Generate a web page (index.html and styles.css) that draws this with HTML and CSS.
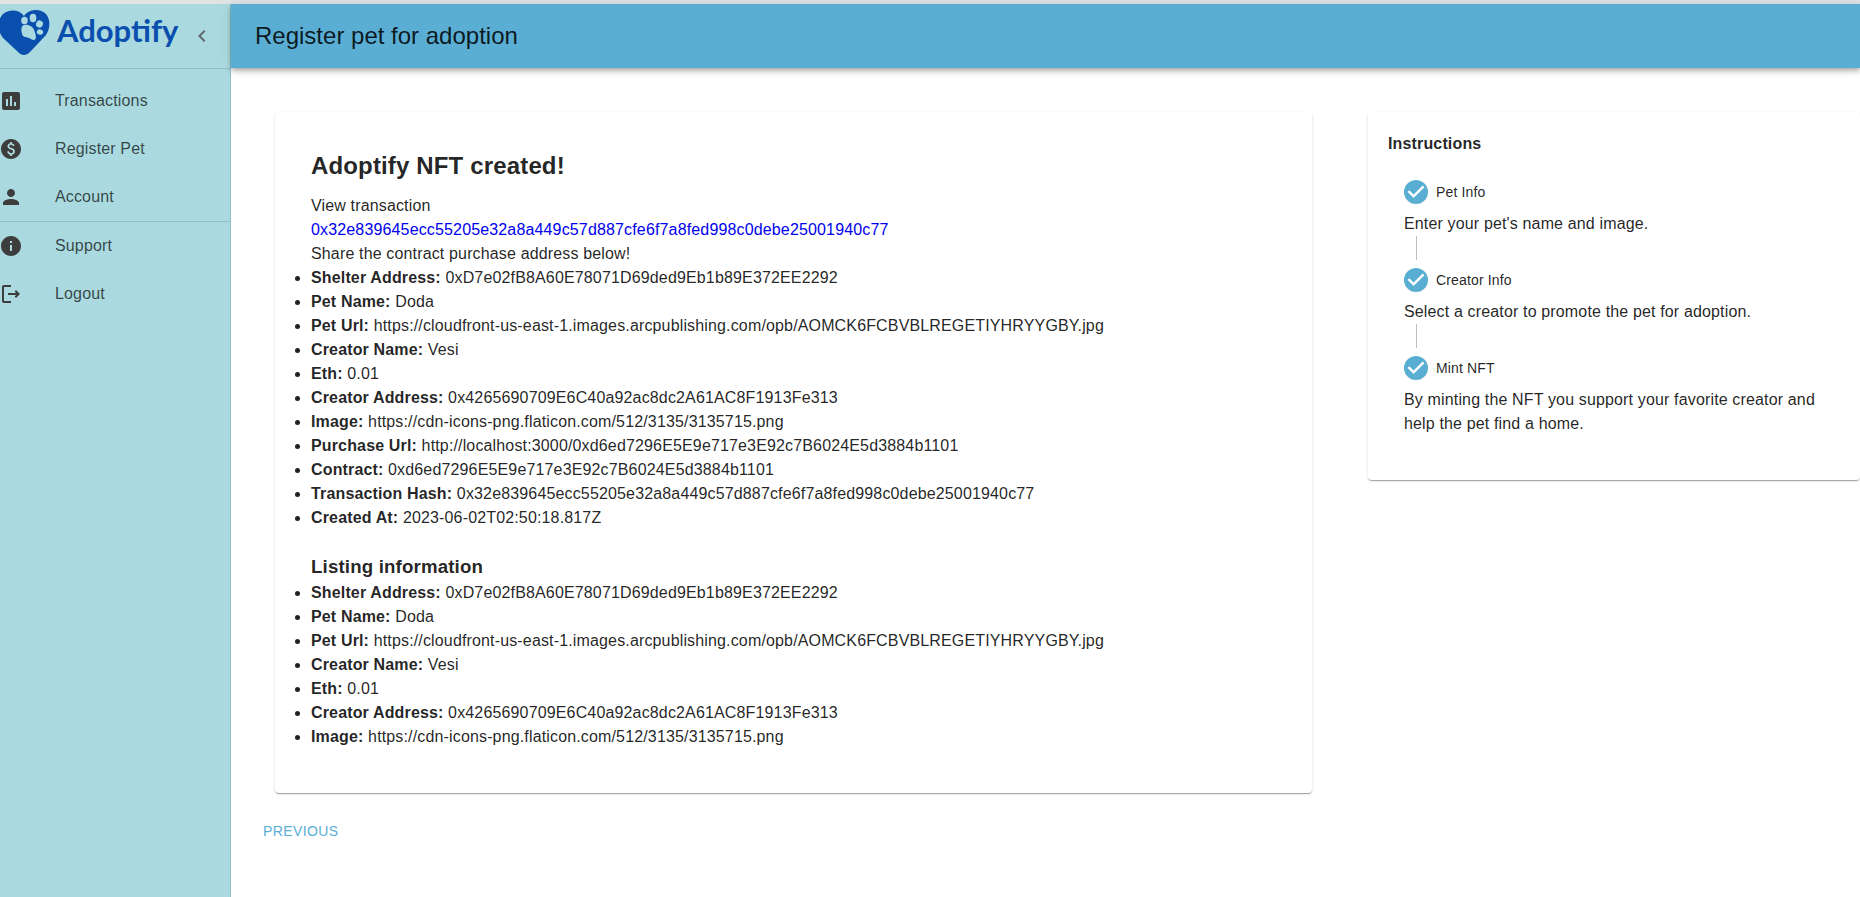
FILE: index.html
```html
<!DOCTYPE html>
<html lang="en">
<head>
<meta charset="utf-8">
<title>Adoptify</title>
<link rel="stylesheet" href="styles.css">
</head>
<body>
<div class="topline"></div>
<div class="app">
  <aside class="sidebar">
    <div class="brand">
      <svg class="logo" viewBox="0 0 50 46" width="50" height="46">
        <path fill="#0a4fae" d="M24 45C22 45 20 44 17 41L3 28C-3 21-3 10 3 4C9-1 19-1 24 6C29-1 40-2 46 4C51 10 50 19 46 25L31 41C28 44 26 45 24 45Z"/>
        <g fill="#aadadf">
          <ellipse cx="24.500" cy="10.500" rx="3.300" ry="3.800"/>
          <ellipse cx="33" cy="8" rx="3.300" ry="4.200"/>
          <ellipse cx="39.500" cy="14" rx="3.400" ry="3.600" transform="rotate(30 39.500 14)"/>
          <ellipse cx="40" cy="22" rx="3.200" ry="2.700" transform="rotate(20 40 22)"/>
          <path d="M24 15C28 14 33 16 34.500 21C35.500 24 36.500 27 35.500 29C34 31.500 31 29 29 28C26 27 22 27 22 23.500C21 20 21 16 24 15Z"/>
        </g>
      </svg>
      <span class="brand-name">Adoptify</span>
      <svg class="chev" viewBox="0 0 24 24" width="24" height="24"><path fill="#5f6a6c" d="M15.410 7.410 14 6l-6 6 6 6 1.410-1.410L10.830 12z"/></svg>
    </div>
    <nav class="nav nav-first">
      <a class="nav-item"><svg class="ico" viewBox="0 0 24 24"><path d="M19 3H5c-1.100 0-2 .9-2 2v14c0 1.100.9 2 2 2h14c1.100 0 2-.9 2-2V5c0-1.100-.9-2-2-2zM9 17H7v-7h2v7zm4 0h-2V7h2v10zm4 0h-2v-4h2v4z"/></svg><span>Transactions</span></a>
      <a class="nav-item"><svg class="ico" viewBox="0 0 24 24"><path d="M12 2C6.480 2 2 6.480 2 12s4.480 10 10 10 10-4.480 10-10S17.520 2 12 2zm.880 15.760V19h-1.750v-1.290c-.74-.18-2.390-.77-3.020-2.960l1.650-.67c.06.220.580 2.090 2.400 2.090.930 0 1.980-.48 1.980-1.610 0-.96-.7-1.460-2.280-2.030-1.100-.39-3.350-1.030-3.350-3.310 0-.1.010-2.400 2.620-2.960V5h1.750v1.240c1.840.320 2.510 1.790 2.660 2.230l-1.580.67c-.11-.35-.59-1.340-1.900-1.340-.7 0-1.810.370-1.810 1.390 0 .950.860 1.310 2.640 1.900 2.400.830 3.010 2.050 3.010 3.450 0 2.630-2.500 3.130-3.020 3.220z"/></svg><span>Register Pet</span></a>
      <a class="nav-item"><svg class="ico" viewBox="0 0 24 24"><path d="M12 12c2.210 0 4-1.790 4-4s-1.790-4-4-4-4 1.790-4 4 1.790 4 4 4zm0 2c-2.670 0-8 1.340-8 4v2h16v-2c0-2.660-5.330-4-8-4z"/></svg><span>Account</span></a>
    </nav>
    <nav class="nav">
      <a class="nav-item"><svg class="ico" viewBox="0 0 24 24"><path d="M12 2C6.480 2 2 6.480 2 12s4.480 10 10 10 10-4.480 10-10S17.520 2 12 2zm1 15h-2v-6h2v6zm0-8h-2V7h2v2z"/></svg><span>Support</span></a>
      <a class="nav-item"><svg class="ico" viewBox="0 0 24 24"><path d="M17 8l-1.410 1.410L17.170 11H9v2h8.170l-1.580 1.580L17 16l4-4-4-4zM5 5h7V3H5c-1.100 0-2 .9-2 2v14c0 1.100.9 2 2 2h7v-2H5V5z"/></svg><span>Logout</span></a>
    </nav>
  </aside>
  <div class="content">
    <header class="appbar"><h1>Register pet for adoption</h1></header>
    <main class="main">
      <div class="col-left">
        <section class="card result">
          <h2>Adoptify NFT created!</h2>
          <p>View transaction</p>
          <p><a class="txlink">0x32e839645ecc55205e32a8a449c57d887cfe6f7a8fed998c0debe25001940c77</a></p>
          <p>Share the contract purchase address below!</p>
          <ul>
            <li><b>Shelter Address:</b> 0xD7e02fB8A60E78071D69ded9Eb1b89E372EE2292</li>
            <li><b>Pet Name:</b> Doda</li>
            <li><b>Pet Url:</b> https://cloudfront-us-east-1.images.arcpublishing.com/opb/AOMCK6FCBVBLREGETIYHRYYGBY.jpg</li>
            <li><b>Creator Name:</b> Vesi</li>
            <li><b>Eth:</b> 0.01</li>
            <li><b>Creator Address:</b> 0x4265690709E6C40a92ac8dc2A61AC8F1913Fe313</li>
            <li><b>Image:</b> https://cdn-icons-png.flaticon.com/512/3135/3135715.png</li>
            <li><b>Purchase Url:</b> http://localhost:3000/0xd6ed7296E5E9e717e3E92c7B6024E5d3884b1101</li>
            <li><b>Contract:</b> 0xd6ed7296E5E9e717e3E92c7B6024E5d3884b1101</li>
            <li><b>Transaction Hash:</b> 0x32e839645ecc55205e32a8a449c57d887cfe6f7a8fed998c0debe25001940c77</li>
            <li><b>Created At:</b> 2023-06-02T02:50:18.817Z</li>
          </ul>
          <h3>Listing information</h3>
          <ul>
            <li><b>Shelter Address:</b> 0xD7e02fB8A60E78071D69ded9Eb1b89E372EE2292</li>
            <li><b>Pet Name:</b> Doda</li>
            <li><b>Pet Url:</b> https://cloudfront-us-east-1.images.arcpublishing.com/opb/AOMCK6FCBVBLREGETIYHRYYGBY.jpg</li>
            <li><b>Creator Name:</b> Vesi</li>
            <li><b>Eth:</b> 0.01</li>
            <li><b>Creator Address:</b> 0x4265690709E6C40a92ac8dc2A61AC8F1913Fe313</li>
            <li><b>Image:</b> https://cdn-icons-png.flaticon.com/512/3135/3135715.png</li>
          </ul>
        </section>
        <button class="prev">PREVIOUS</button>
      </div>
      <section class="card steps">
        <h4>Instructions</h4>
        <div class="step">
          <div class="step-label"><svg class="check" viewBox="0 0 24 24"><path d="M12 0a12 12 0 1 0 0 24 12 12 0 0 0 0-24zm-2.400 18-6-6 1.690-1.690 4.310 4.300 9.110-9.110L20.400 7.200z"/></svg><span>Pet Info</span></div>
          <div class="step-text">Enter your pet's name and image.</div>
        </div>
        <div class="connector"></div>
        <div class="step">
          <div class="step-label"><svg class="check" viewBox="0 0 24 24"><path d="M12 0a12 12 0 1 0 0 24 12 12 0 0 0 0-24zm-2.400 18-6-6 1.690-1.690 4.310 4.300 9.110-9.110L20.400 7.200z"/></svg><span>Creator Info</span></div>
          <div class="step-text">Select a creator to promote the pet for adoption.</div>
        </div>
        <div class="connector"></div>
        <div class="step">
          <div class="step-label"><svg class="check" viewBox="0 0 24 24"><path d="M12 0a12 12 0 1 0 0 24 12 12 0 0 0 0-24zm-2.400 18-6-6 1.690-1.690 4.310 4.300 9.110-9.110L20.400 7.200z"/></svg><span>Mint NFT</span></div>
          <div class="step-text">By minting the NFT you support your favorite creator and help the pet find a home.</div>
        </div>
      </section>
    </main>
  </div>
</div>
</body>
</html>
```
FILE: styles.css
```css
* { box-sizing: border-box; }
html, body { margin: 0; height: 100%; }
body {
  font-family: "Liberation Sans", Arial, sans-serif;
  font-size: 16px;
  line-height: 24px;
  letter-spacing: 0.15px;
  color: rgba(0,0,0,0.87);
  background: #fff;
  overflow: hidden;
}
.topline { height: 4px; background: #dfe3e4; }
.app { display: flex; height: 893px; }
.sidebar {
  width: 231px;
  flex: none;
  background: #aadadf;
  border-right: 1px solid #8fbfc9;
  overflow: hidden;
}
.brand {
  height: 65px;
  display: flex;
  align-items: center;
  border-bottom: 1px solid #8fbfc9;
}
.logo { flex: none; margin-top: -6px; }
.brand-name {
  font-size: 31px;
  font-weight: 700;
  color: #0a4fae;
  letter-spacing: 0;
  margin-left: 7px;
  margin-top: -13px;
  font-family: "Lato", "Liberation Sans", sans-serif;
}
.chev { margin-left: auto; margin-right: 16px; margin-top: -1px; flex: none; }
.nav-first { padding-top: 8px; border-bottom: 1px solid #8fbfc9; }
.nav-item {
  display: flex;
  align-items: center;
  height: 48px;
  color: rgba(0,0,0,0.7);
}
.nav-item span { margin-left: 32px; }
.ico { width: 24px; height: 24px; fill: #3d3d3d; margin-left: -1px; flex: none; }
.content { flex: 1; min-width: 0; display: flex; flex-direction: column; }
.appbar {
  height: 64px;
  background: #5aaed4;
  display: flex;
  align-items: center;
  padding-left: 24px;
  box-shadow: 0 2px 4px -1px rgba(0,0,0,.2), 0 4px 5px 0 rgba(0,0,0,.14), 0 1px 10px 0 rgba(0,0,0,.12);
  position: relative;
}
.appbar h1 { margin: 0; font-size: 24px; font-weight: 400; letter-spacing: 0; line-height: 32px; }
.main { display: flex; align-items: flex-start; padding-top: 44px; padding-left: 44px; }
.card {
  background: #fff;
  border-radius: 4px;
  box-shadow: 0 2px 1px -1px rgba(0,0,0,.2), 0 1px 1px 0 rgba(0,0,0,.14), 0 1px 3px 0 rgba(0,0,0,.12);
}
.col-left { width: 1037px; flex: none; }
.result { padding: 38px 36px 36px; height: 681px; }
.result h2 { margin: 0 0 12px; font-size: 24px; line-height: 32px; font-weight: 700; letter-spacing: 0.15px; }
.result p { margin: 0; }
.txlink { color: #0000ee; }
.result ul { margin: 0; padding-left: 0; list-style: disc; }
.result h3 { margin: 23px 0 0; font-size: 18.7px; line-height: 28px; font-weight: 700; letter-spacing: 0.15px; }
.prev {
  display: block;
  margin: 26px 0 0 -12px;
  padding: 0;
  background: none;
  border: 0;
  font: inherit;
  font-size: 14px;
  line-height: 24px;
  letter-spacing: 0.4px;
  color: #5aaed4;
}
.steps {
  width: 492px;
  height: 368px;
  margin-left: 56px;
  padding: 20px;
}
.steps h4 { margin: 0 0 24px; font-size: 16px; line-height: 24px; font-weight: 700; }
.step { padding-left: 16px; }
.step-label { display: flex; align-items: center; height: 24px; font-size: 14px; }
.check { width: 24px; height: 24px; fill: #5aaed4; flex: none; margin-right: 8px; }
.step-text { margin-top: 8px; }
.connector { height: 24px; margin: 0 0 8px 28px; border-left: 1px solid #bdbdbd; }
```
